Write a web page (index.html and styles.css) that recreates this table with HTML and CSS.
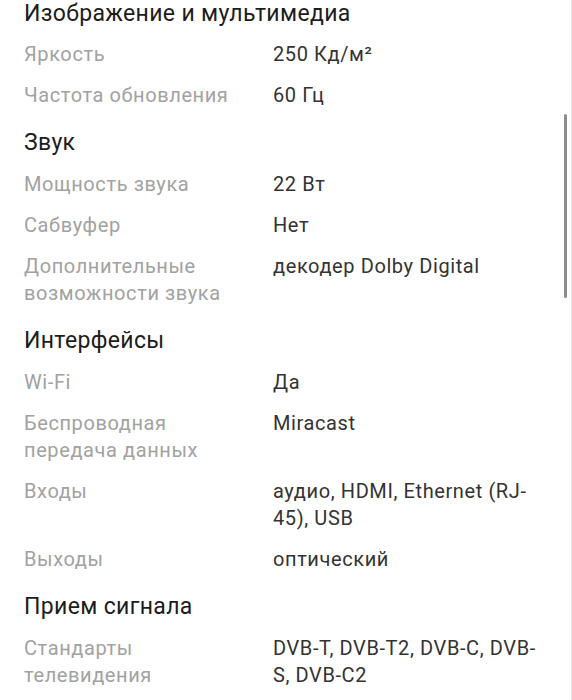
FILE: index.html
```html
<!DOCTYPE html>
<html lang="ru">
<head>
<meta charset="utf-8">
<title>Характеристики</title>
<link rel="stylesheet" href="styles.css">
</head>
<body>
<main class="specs">
  <section class="group">
    <h2 class="group-title">Изображение и мультимедиа</h2>
    <div class="row"><div class="label">Яркость</div><div class="value">250 Кд/м²</div></div>
    <div class="row"><div class="label">Частота обновления</div><div class="value">60 Гц</div></div>
  </section>
  <section class="group">
    <h2 class="group-title">Звук</h2>
    <div class="row"><div class="label">Мощность звука</div><div class="value">22 Вт</div></div>
    <div class="row"><div class="label">Сабвуфер</div><div class="value">Нет</div></div>
    <div class="row"><div class="label">Дополнительные возможности звука</div><div class="value">декодер Dolby Digital</div></div>
  </section>
  <section class="group">
    <h2 class="group-title">Интерфейсы</h2>
    <div class="row"><div class="label">Wi-Fi</div><div class="value">Да</div></div>
    <div class="row"><div class="label">Беспроводная передача данных</div><div class="value">Miracast</div></div>
    <div class="row"><div class="label">Входы</div><div class="value">аудио, HDMI, Ethernet (RJ-45), USB</div></div>
    <div class="row"><div class="label">Выходы</div><div class="value">оптический</div></div>
  </section>
  <section class="group">
    <h2 class="group-title">Прием сигнала</h2>
    <div class="row"><div class="label">Стандарты телевидения</div><div class="value">DVB-T, DVB-T2, DVB-C, DVB-S, DVB-C2</div></div>
  </section>
</main>
<div class="edge"></div>
<div class="scroll-thumb"></div>
</body>
</html>
```
FILE: styles.css
```css
html, body {
  margin: 0;
  padding: 0;
  background: #ffffff;
}
body {
  font-family: Roboto, "Noto Sans", "DejaVu Sans", sans-serif;
  -webkit-font-smoothing: antialiased;
}
.specs {
  padding: 0 24px;
}
.group + .group {
  margin-top: 20px;
}
.group-title {
  margin: 0;
  font-size: 23px;
  letter-spacing: 0.35px;
  line-height: 27px;
  font-weight: 400;
  color: #1c1c1c;
}
.group + .group .group-title {
  line-height: 28px;
}
.row {
  display: grid;
  grid-template-columns: 225px 275px;
  column-gap: 24px;
  margin-top: 14px;
  font-size: 20px;
  letter-spacing: 0.6px;
  line-height: 27px;
}
.label {
  color: #a2a2a2;
}
.value {
  color: #333333;
}
.edge {
  position: fixed;
  top: 0;
  right: 0;
  width: 1px;
  height: 100%;
  background: #e6e6e6;
}
.scroll-thumb {
  position: fixed;
  top: 114px;
  right: 5px;
  width: 3px;
  height: 184px;
  border-radius: 2px;
  background: #8c8c8c;
}
```
